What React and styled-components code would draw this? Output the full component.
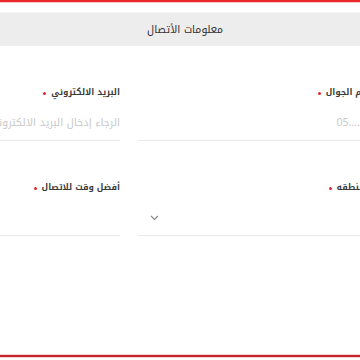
import React from "react";
import styled, { createGlobalStyle } from "styled-components";

const Global = createGlobalStyle`
  html, body { margin: 0; padding: 0; background: #fff; }
  body { font-family: "Noto Kufi Arabic", "Noto Sans Arabic", "DejaVu Sans", sans-serif; }
  * { box-sizing: border-box; }
`;

const Page = styled.div`
  width: 360px;
  height: 360px;
  overflow: hidden;
  display: flex;
  flex-direction: column;
  direction: rtl;
  background: #fff;
`;

const TopBar = styled.div`
  height: 2px;
  flex: none;
  background: #e8262c;
  box-shadow: 0 1px 1px #f8c4c6;
`;

const SectionHeader = styled.div`
  margin-top: 10px;
  height: 34px;
  flex: none;
  background: #ededee;
  border-top: 1px solid #f3f7f8;
  display: flex;
  align-items: center;
  justify-content: center;
  padding-left: 10px;
  font-size: 10.5px;
  color: #333;
`;

const Form = styled.div`
  flex: 1;
  padding-top: 38px;
  overflow: hidden;
`;

const Grid = styled.div`
  width: 484px;
  margin-right: -11px;
  display: grid;
  grid-template-columns: 233px 233px;
  column-gap: 18px;
  row-gap: 38px;
`;

const Field = styled.div`
  display: flex;
  flex-direction: column;
  min-width: 0;
`;

const Label = styled.label`
  height: 16px;
  line-height: 16px;
  font-size: 8.6px;
  font-weight: bold;
  color: #3a3a3a;
  white-space: nowrap;
  display: flex;
  align-items: center;
  gap: 5px;
`;

const Required = styled.span`
  width: 3px;
  height: 3px;
  border-radius: 50%;
  background: #e3262b;
  margin-top: 2px;
`;

const Control = styled.div`
  margin-top: 5px;
  height: 36px;
  border-bottom: 1px solid #e9e9e9;
  display: flex;
  align-items: center;
  position: relative;
`;

const Input = styled.input`
  border: none;
  outline: none;
  background: transparent;
  width: 100%;
  height: 34px;
  padding: 0;
  font-family: inherit;
  font-size: 10.5px;
  color: #333;
  direction: ${(p) => (p.$ltr ? "ltr" : "rtl")};
  text-align: right;
  &::placeholder { color: #c9c9c9; }
`;

const Chevron = styled.svg`
  position: absolute;
  left: 12px;
  top: 50%;
  margin-top: -3px;
  width: 9px;
  height: 6px;
`;

const SelectValue = styled.span`
  flex: 1;
`;

const BottomBar = styled.div`
  height: 2px;
  flex: none;
  margin-bottom: 3px;
  background: #c2262c;
  box-shadow: 0 0 1px 1px #f8d0d2;
`;

function Select() {
  return (
    <Control>
      <SelectValue />
      <Chevron viewBox="0 0 9 6">
        <path d="M1 1l3.5 3.5L8 1" fill="none" stroke="#8a8a8a" strokeWidth="1.2" />
      </Chevron>
    </Control>
  );
}

export default function App() {
  return (
    <>
      <Global />
      <Page>
        <TopBar />
        <SectionHeader>معلومات الأتصال</SectionHeader>
        <Form>
          <Grid>
            <Field>
              <Label>رقم الجوال<Required /></Label>
              <Control>
                <Input $ltr placeholder="05........" />
              </Control>
            </Field>
            <Field>
              <Label>البريد الالكتروني<Required /></Label>
              <Control>
                <Input placeholder="الرجاء إدخال البريد الالكتروني" />
              </Control>
            </Field>
            <Field>
              <Label>المنطقه<Required /></Label>
              <Select />
            </Field>
            <Field>
              <Label>أفضل وقت للاتصال<Required /></Label>
              <Control />
            </Field>
          </Grid>
        </Form>
        <BottomBar />
      </Page>
    </>
  );
}
